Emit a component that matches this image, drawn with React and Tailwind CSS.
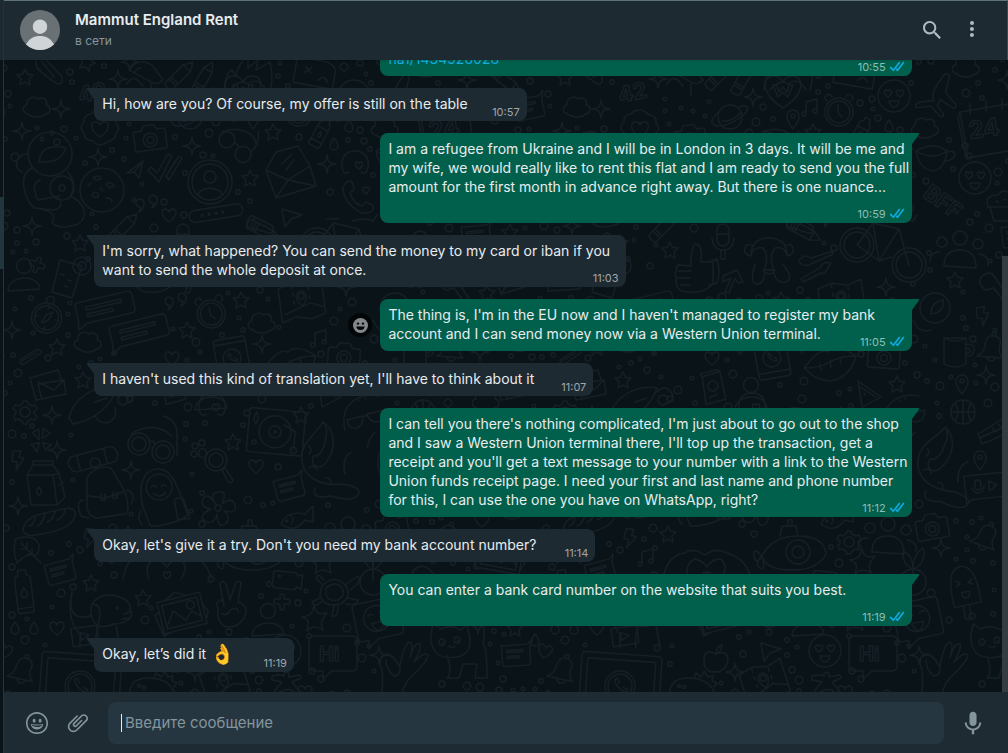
import React from "react";

/* ---------- wallpaper ---------- */

const ring = (x, y, r) => `M${x - r} ${y}a${r} ${r} 0 1 0 ${2 * r} 0a${r} ${r} 0 1 0 ${-2 * r} 0`;
const HEART = "M0 7C-9 1-8-6-4-6-1-6 0-3 0-3 0-3 1-6 4-6 8-6 9 1 0 7z";
const heartAt = (x, y) => `M${x} ${y + 4}c-5-3-4-7-2-7 1.500 0 2 1.500 2 1.500 0 0 .5-1.500 2-1.500 2 0 3 4-2 7z`;

/* name: [clear radius, path] */
const DOODLES = {
  star: [9, "M0-8L2.500-2.800 8-2 4 2 5 8 0 5.200-5 8-4 2-8-2-2.500-2.800z"],
  starfish: [13, "M-1-13C1-6 3-4 12-6 8 0 4 2 8 11 2 8-2 6-8 12-6 4-5 1-13-2-6-3-3-4-1-13z"],
  sparkle: [9, "M0-9C1-2 2-1 9 0 2 1 1 2 0 9-1 2-2 1-9 0-2-1-1-2 0-9z"],
  plus: [8, "M-2-7q2-2 4 0l0 4 5 0q2 2 0 5l-5 0 0 5q-2 2-4 0l0-5-5 0q-2-3 0-5l5 0z"],
  heart: [9, HEART],
  drop: [7, "M0-6C3-2 4 0 4 2a4 4 0 0 1-8 0C-4 0-3-2 0-6z"],
  cloud: [14, "M-9 8C-15 7-15 0-10-1-11-8-3-11 1-7 7-10 11-5 9-1 15 0 14 8 8 8 5 12-5 12-9 8z"],
  bolt: [10, "M-5-9L3-9 1-3 6-2-2 10-1 2-6 1z"],
  astronaut: [42, ring(0, -36, 22) + "M-11-28C-10-46 8-44 16-42 10-28 2-28-11-28zM-18-22C-34-14-24 10-16 18L4 20C14 18 12 8 6 8M-24-36C-36-34-36-20-28-18M18-18C26-8 24 0 20 6 34 12 40 26 28 34 16 38 6 38 2 32 8 24-2 20-14 18M-10-10C-20-6-14 6-12 10L10 6" + ring(12, -2, 12) + ring(12, -2, 3)],
  moon: [23, ring(0, 0, 22) + "M-9-12q6-4 8 0q-4 4-8 0zM4-6q6-3 8 2q-4 4-8-2zM-10 6q2-6 6-2q2 6-6 2zM4 8q6 0 6 4M-14-4l3-3M-2-2l3 3"],
  badge: [20, "M0-18c5 0 6 4 10 5 4 0 7 4 6 8 4 4 3 8 0 10 0 5-4 8-8 8-4 5-12 5-15 0-5 0-9-3-9-8-4-4-4-8 0-11-1-5 3-8 7-8 2-3 5-4 9-4zM0 9C-12 2-9-7-4-6-1-6 0-3 0-3 0-3 1-6 4-6 9-7 12 2 0 9z"],
  camera: [18, "M-14-8h6l3-5h10l3 5h6q2 0 2 2v16q0 2-2 2h-28q-2 0-2-2v-16q0-2 2-2z" + ring(0, 2, 7) + ring(0, 2, 3.5)],
  shades: [22, ring(-11, -3, 8) + ring(8, 8, 8) + "M-4 0q4-3 6 2M-17-10Q-2-20 14-12l4 6M15 4Q22-4 18-18"],
  bottle: [16, "M-6-6q0-4 3-5v-4h6v4q3 1 3 5v20q0 2-2 2h-8q-2 0-2-2zM-6-4h12M-6 10h12M0 0q3 3 0 6-3-3 0-6"],
  envelope: [28, "M-24-2L-14-20 8-26 20-6 26 14-14 26-24-2-2 8 20-6M-14 26L-2 8 26 14M-8-8l10-10M-4-2L4-12"],
  letters: [20, "M-20-6l28-8 4 12M-20-6l6 22 30-6-2-14-26 4 4 16M-12-2L4 6 14-4"],
  heartface: [15, "M-12 8C-16-4-10-12 0-12 10-12 16-4 12 8M-12 8q3 4 6 1M12 8q-3 4-6 1" + heartAt(4, 2)],
  handset: [17, "M-10-14q4-3 6 2l1 5-4 4q3 10 12 13l4-4 6 3q3 3 0 6-6 4-12 1Q-12 8-14-6q0-5 4-8zM8-2" + heartAt(9, -6)],
  profile: [23, ring(0, 0, 22) + ring(0, 0, 18) + ring(0, -5, 6) + "M-12 13C-10 4 10 4 12 13"],
  checks: [17, "M-16 2l3-3 6 6L4-14l4 2L-5 14zM2 8l3 4L18-10l-3-2z"],
  plane: [9, "M-8 4L8-8 4 9-1 3zM-1 3l9-11"],
  cursor: [11, "M-10-8L10-2-1 2-7 10z"],
  quote: [11, "M-9 6q5-3 5-8a4 4 0 1 0-3 3zM4 2q5-3 5-8a4 4 0 1 0-3 3z"],
  pill: [24, "M-22-6h42a5 5 0 0 1 0 12h-42a5 5 0 0 1 0-12z" + ring(-15, 0, 1) + ring(-8, 0, 1) + ring(-1, 0, 1) + ring(6, 0, 1)],
  pencil: [18, "M-18-5h26l9 5-9 5h-26q-3-5 0-10zM8-5v10M-12-5v10M-9-5v10"],
  tube: [15, "M-14-6L10-4q4 4 0 8l-24 2q-3-6 0-12zM-10-6v12"],
  bicycle: [44, ring(-26, 4, 17) + ring(-26, 4, 13) + ring(26, 24, 17) + ring(26, 24, 13) + "M-26 4L-10-18 16-12-4 20zM-10-18L-4 20 8 16M16-12l10 36M10-20q12-4 20 0l4-6M-16-22h12"],
  person: [18, ring(0, -11, 7.5) + "M-16 14C-16-2 14-4 16 12z"],
  people: [28, ring(0, -14, 7) + ring(-18, -10, 5) + ring(18, -8, 5) + "M-16 14q0-16 16-16t16 18zM-30 10q0-10 10-10M28 14q2-10-9-12"],
  drink: [20, "M-10-18L12-12 2 20-18 14zM-10-4l4 1M-2 2l3 1M-6 8l4 1" + ring(12, -12, 9) + ring(12, -12, 4)],
  compass: [18, ring(0, 2, 15) + ring(0, 2, 12) + ring(0, -16, 4) + "M-4 8L-1-1 5-5 2 4zM0-10v3M12 2h-3M-12 2h3M0 14v-3"],
  chat: [30, "M-26-10h52q4 0 4 4v14q0 4-4 4h-46l-10 5 2-9v-14q0-4 2-4zM-18-4h36v3h-36zM-18 3h26v3h-26z"],
  note: [16, "M-13-9h26l5-4-3 8v14q0 3-3 3h-22q-3 0-3-3zM-8-4h16v2h-16zM-8 2h12v2h-12z"],
  clock: [16, ring(0, 2, 14) + ring(0, 2, 11) + "M-1-5v8l4 4M-12-9q-4-3 0-6 4-2 5 2M12-9q4-3 0-6-4-2-5 2"],
  map: [24, "M-22-16L-8-20 8-16 22-20V14L8 18-8 14-22 18zM-8-18v3M-8-10v3M-8-2v3M8-14v3M8-6v3M-18 10L8 2l14 6" + ring(0, -6, 3) + "M-5-6q0 5 5 10 5-5 5-10a5 5 0 0 0-10 0"],
  clip: [12, "M-10 4L6-6q5-1 5 3L-6 8q-4 1-4-2L6-3"],
  device: [21, "M-13-20h26q3 0 3 3v34q0 3-3 3h-26q-3 0-3-3v-34q0-3 3-3zM-16-15h32M-16 14h32" + ring(0, 0, 9) + "M-4-4q2 6 8 8M-4-4l2-1 2 3M4 4l1-2-3-2"],
  lips: [26, "M-26 4C-18-6-10-16-2-12 4-18 14-16 26-8 22 8 8 20-6 16-18 14-20 8-26 4zM-26 4Q-10 4 0-2T26-8M-10 0l1 6M0-4l1 8M10-6l1 6"],
  music: [8, "M-5 6V-6L6-9V3" + ring(-7, 6, 2) + ring(4, 3, 2)],
  gear: [12, ring(0, 0, 5) + "M-2-11h4l1 3 4 2 3-1 2 4-3 2v3l3 2-2 4-4-1-3 2-1 3h-4l-1-3-4-2-3 1-1-4 2-3v-2l-3-2 2-4 4 1 3-2z"],
  fan: [12, "M-2 0L-10-6-4-10zM1-2L0-12 8-8zM2 2L11 3 6 9zM-1 3L-2 12-9 6z"],
  rocket: [32, "M-26 12C-22-8 0-22 22-18 16 0 0 14-22 18zM0-4l12-4M0 10a10 10 0 0 0 20-8M22-14q8-8 14 0t-6 12" + ring(28, -6, 5)],
  goggles: [28, ring(-14, 6, 11) + ring(-14, 6, 7) + ring(10, 14, 11) + ring(10, 14, 7) + "M-22-4Q-4-16 14-6l4 4M-4 4q4-3 6 2M10-22q14 4 14 18v22"],
  record: [30, "M-26-22h50q3 0 3 3v38q0 3-3 3h-50q-3 0-3-3v-38q0-3 3-3z" + ring(-2, 0, 16) + ring(-2, 0, 6) + ring(-2, 0, 1) + "M6-8l12 6v16" + ring(18, 17, 3) + ring(-22, 12, 2) + "M-22-18q4 6 0 12-4-6 0-12"],
  dinoface: [30, "M-20 12C-26-14-6-26 14-22M-18 2l16-4q0 10-6 12-8 2-10-8zM2-4l18-4q0 10-8 12-8 0-10-8zM-2-2h4M-6-18l1 1M0-20l1 1M10 14q-6 6-8 16"],
  octopus: [42, "M-8-36C-18-20-34-14-28 8-22 24-4 28 12 26M-8-36q6 6 2 20-2 10-8 14-6-2-4 8 8 8 16-6C6-14 2-30-8-36M20-6q-10 8-6 22M-22-12q4 4 0 8M-22 10q6-4 8 2M-6 20q6-2 6 6M12 26q22 4 14 12-6 6-26 0-20 4-16-8"],
  milk: [24, "M-18-10L-12-20H8L14-12 20 12 12 20-14 20zM-18-10H8L14-12M8-10l4 30M-12-20v-4H8v4M-6 2q5 6 0 8-5-2 0-8M14 0l5-3"],
  roll: [26, "M-22-8H18a9 9 0 0 1 2 16h-40a9 9 0 0 1-2-16zM-16-8v16M12-8v16" + ring(0, 4, 5)],
  backpack: [28, "M-18-14Q-10-28 6-24L20 0q6 20 0 22L-8 26Q-18 24-18 14zM-16 4L0 6 18 0M-22 8q-8 2-2 16l8 2M22-2q10 4 4 14M-4 2v6h4v-6M8 0v6h4v-6"],
  spacer: [30, "M-18 8C-22-20-10-30 2-28 18-26 22 8 26 20 22 26-6 30-12 28zM-20 12q-6 8 0 14M14 4q8-4 10 2l4 18h-12z" + ring(0, -10, 13) + "M-8-10q3-4 5 0M2-10q3-4 5 0M-6-4q6 6 12 0"],
  lens: [20, ring(0, -4, 11) + ring(0, -4, 7) + "M6 6l3-2 8 12q-1 4-5 2z"],
  paw: [10, ring(-5, 4, 3) + ring(-4, -4, 3) + ring(3, -7, 3) + "M0 0q6-4 8 4-2 6-8 2z"],
  flower: [17, ring(0, 0, 3) + "M-2-4q-8-10 2-12t4 12q10-8 13 1t-11 6q8 8 1 13T-1 6q-4 12-12 7t6-12q-12-2-8-10t13 5"],
  baguette: [26, "M-26 8Q-24-4-8-8T20-14q10 2 4 12T-8 12q-16 4-18-4zM-14-4q-2 8-6 8M-4-8q-2 10-8 12M6-10q-2 8-8 10M16-12q-2 8-8 10"],
  fish: [18, "M-16 6Q-10-8 8-4l8-8 0 16-8-2Q-2 16-16 6zM-6-2q4 4 0 8" + ring(-10, 3, 1)],
  leaf: [17, "M-12-10Q8-16 12-4 12 8 6 6T-10 14Q-14 4-12-10zM14 14L-6-6M0 0v-6M0 0h-6M5 5V0M5 5H0"],
  tallbottle: [22, "M-8-12q0-4 4-5v-5h8v5q4 1 4 5v30q0 3-3 3h-10q-3 0-3-3zM0-4q6 8 0 10-6-2 0-10M-8 16h16"],
  dog: [32, "M-34-20Q-40 8-26 22v14M-34-20q-6 30 18 24M-14-8Q-6-20 10-16t14 14q4 6-2 10T8 12Q-2 16-8 14-18 6-14-8zM-14-8q8 0 8 10l-2 12M24 0l-6 2M24 6l-8 1M-8 16q-4 12-2 20M10 14l4 20" + ring(11, -4, 1)],
  photo: [26, "M-22-16H22V16H-22zM-18-12H18V12H-18zM-18 10L-8-4 2 8 10 0 18 8M-22-6l-5 2 4 22 8-2M8-16L-2-22-14-16M22-4l4 8-4 8" + ring(10, -6, 4)],
  peace: [24, "M-8 2L-12-20q3-5 6 0L-2-4 4-22q5-2 5 2L6-2Q18 2 12 14 4 26-8 22-16 16-14 4-18 0-12-4 -8-4-8 2zM-2 6q8-4 8 2M-10 10q6 2 8-4"],
  video: [15, "M-12-8H6q3 0 3 3l5-2V8l-5-2q0 3-3 3h-18q-3 0-3-3v-11q0-3 3-3z" + ring(-9, -3, 1)],
  turtle: [25, "M-12-8Q0-18 10-6 16 6 4 12-12 16-16 4-16-4-12-8zM-10-4Q0-12 6-4 10 4 2 8-8 10-10 2zM10-8l12-8q4 6-8 14M-14-8l-6-6q2-6 8 2M-2 14l-2 10q6 2 6-10M-16 6l-8 4q2 6 10 0M12 6l10 2q0 6-12 4"],
  bell: [14, "M-14 8Q-6 4-6-4-4-14 4-12 12-10 8 0 8 6 12 10zM-4 10q4 6 8 1" + ring(3, -14, 2)],
  play: [14, "M-13-9H10q3 0 3 3V6q0 3-3 3H-13zM-4-4L4 0-4 4z"],
  frame: [44, "M-36-32H36q4 0 4 4v70M-40 42v-70q0-4 4-4M-34 42V-26H34V42" + ring(0, 0, 15) + ring(0, 0, 12) + "M-6-6q2 8 12 12M-6-6l3-2 2 5M6 6l2-3-5-2"],
  dino: [24, "M-22 16Q-26-8-4-8 20-8 24 12M2-8l2-5 5 4 1-1 2-5 4 6 5-1-1 5 5 2-3 4" + ring(-13, 0, 1.5) + ring(-8, 1, 1.5)],
  yoga: [16, "M-14-6Q-6-8-2-6V-8q3-4 5 0v3l10-2q4 2 0 4L6 0l8 10q-4 4-8-2-8-2-14 4-6 0-2-5L-4 0l-10-2z"],
  love: [18, ring(0, 0, 16) + heartAt(-6, -3) + heartAt(6, -3) + "M-5 5h10q-1 6-5 6t-5-6z"],
  apple: [14, "M0-6Q-12-12-12 0T-2 12q2-1 5 0Q12 8 12-2 10-10 0-6zM0-6q0-8 6-9 0 6-6 9"],
  okhand: [28, "M-26 24Q-24 4-28-4-28-14-20-14-12-10-8 0-8 8-14 8-22 2-22-8M-8-2Q-4-24 2-26q4 2 0 16Q6-26 12-24q2 4-6 18Q18-18 20-12 18-6 8 4-4 14-6 26"],
  cat: [30, "M-26-14l2-10 8 5Q-6-24 4-18l6-6 2 10Q16 2 4 8-10 12-20 6-28-4-26-14zM-10 8Q-4 24-10 30h12l4-14h14l-2 14h12q0-30-4-34 4-20-6-26-8 2-2 10M-15-6l1 1M0-8l1 1M-8-2l3 2 3-2" + ring(-15, -6, 3) + ring(0, -8, 3)],
  wink: [24, "M-20-20H18q4 0 4 4V14q0 4-4 4H-4l-12 8 2-8h-6q-4 0-4-4v-30q0-4 4-4z" + ring(-2, -2, 13) + "M-10-6q3-3 5 0M2-7q3-3 5 0M-8 2h12q-2 8-6 8t-6-8z"],
  popsicle: [24, "M-13 18Q-18-20-2-22 14-22 14 16zM-4 18v12q3 3 6 0V18M-8-8l4 3-4 2M8-8L4-5l4 2M-4 4h8q0 6-4 6t-4-6z"],
  book: [17, "M-10-12L8-16 12 12-8 16zM-10-12l-2-3 18-3 2 2" + ring(0, -2, 5) + "M-4 9l8-2"],
  mug: [18, "M-11-14H11V12q-11 6-22 0zM-11-14q11 6 22 0M11-8q9 0 8 6-1 7-8 6M11-4q4 0 4 3-1 3-4 2"],
  pin: [9, "M0 9Q-7 0-6-4a6 6 0 0 1 12 0Q7 0 0 9z" + ring(0, -4, 2)],
  pizza: [15, "M-10-12L13 4-6 14zM-8-6L8 4M-4 0l1 2"],
  ball: [13, ring(0, 0, 12) + "M-12 0H12M0-12V12M-8-9q6 9 0 18M8-9q-6 9 0 18"],
  sneaker: [20, "M-18 4L14-16l5 12Q4 8-14 14zM-16 8L18-8M-4-2l4 4M2-6l4 4M8-10l4 4"],
  voice: [22, "M-22-12H24V12H-16l-6 4zM-12-4v4a3 3 0 0 0 6 0v-4a3 3 0 0 0-6 0zM-15 0q1 6 6 6t6-6M2-5l8 5-8 5z"],
  sub: [34, "M-30 6Q-20-14 6-14T34 4Q26 20 0 20T-30 6zM-12-14l2-10h14l2 10M-4-24v-6h4v6M-30 6q-10-10-8 0t8 0q-8 8-2 12t2-12" + ring(6, 2, 12) + ring(6, 2, 6)],
  hands: [44, "M-44 16Q-40-8-22-10-14-16-2-8 8-16 20-10 40-4 44 16M-18 16Q-24 2-12-4-4-2 0 4 4-4 14-4 22 4 14 16" + heartAt(0, 12)],
  plant: [24, "M0 0Q-12-8-10-18 0-16 0 0 0-16 10-22 14-8 0 0zM0 0v10" + ring(0, 12, 13)],
  planet: [18, ring(0, 0, 12) + "M-11-5Q-22 4-16 8-8 12 8 2 20-6 17-10 14-13 8-9M-8 4q8 2 18-8"],
  weart: [20, "M0 17C-24 2-20-15-10-15-2-15 0-9 0-9 0-9 2-15 10-15 20-15 24 2 0 17zM-10-6h4l2 7 4-5 4 5 2-7h4l-5 12-5-5-5 5z"],
  jet: [24, "M-2 6Q-8 0 4-22q5-2 5 2L8-4 20 6q2 4-2 4L4 4l-2 6 8 8q0 4-4 2L-4 12l-14 4q-4-2 2-6z"],
  coffee: [20, "M-17-6Q0-16 14-6 12 12 0 14-14 12-17-6zM-17-6Q0 4 14-6M13-4q8-4 9 2-2 6-11 6"],
  cupcake: [17, "M-14 2Q-18-10-4-10 2-18 10-10q8 4 4 12zM-12 2l4 14H8l4-14M-6-4l2 1M2-6l2 1M7-2l2 1"],
  thumb: [28, "M-4-4Q-4-22 0-26q8 0 6 18h12v22Q8 24-6 22q-10 0-12-6-2-6 0-8-4-4 0-7-2-4 2-6zM-16 1h12M-16 8h11M-14 15h9M14-8l8-3q4 14 0 24l-8 2"],
  mic: [18, "M-6-12a6 6 0 0 1 12 0v10a6 6 0 0 1-12 0zM-11-4Q-10 8 0 8T11-4M-2 8v9h4V8M-6-8h12"],
  arrow: [12, "M-8 12L-2-2-10 2-10-4 4-10 10 2 5 3 2-2-4 13z"],
  monkey: [28, "M-18-4Q-18-22 0-22T18-4M-18-4q-8-2-6-8t8-2M18-4q8-2 6-8t-8-2M-14 4Q-20 24-12 24T-4 8Q0-6-6-12q-10-2-12 8M14 4Q26 20 16 22T4 8Q0-6 6-12 16-14 18-4M-6 10q6 8 12 0z"],
  driver: [20, "M-18-4Q-14-12-6-7L16-14v3L-4-2q-10 6-14-2zM-16 14L4 2q2-6 10-4l-4 6Q8 10 4 8l-18 9z"],
  guitar: [26, "M-16-20q8-6 12 0l4 6 20 30-4 4-20-28-8 2q-10-6-4-14zM16 14q12 0 12 12"],
  globe: [20, ring(0, 0, 15) + "M-4 6Q-4-6 8-8 10 4-4 6zM-22 12Q-16 26-4 22"],
  spray: [20, "M-18-8Q-8-22 6-12l10 14Q10 8 4 4zM-12-6q2-4 6-4M-20 6Q-14-6-4 8M4 6v12"],
  fire: [26, "M-24 14Q-22-4-16-6l4 6Q-10-12 0-20l0 12L10-16 8-6l14-8Q26 4 22 14M-18 14Q-8 2 0 8 10 0 18 14"],
  cards: [22, "M-20-12H10q10 2 10 10V14H-20zM-10-4l6 6M-4-4l-6 6M4 8q6-8 10 0"],
  hotdog: [16, "M-14-8q6-6 12 2L12 6q4 8-4 8-8-4-16-10-8-4-6-12zM-9-7l14 15"],
};

const PLACED = [
  ["star", 25, 77, 0], ["hotdog", 50, 69, 5], ["star", 87, 62, 20], ["sparkle", 130, 62], ["sparkle", 118, 79],
  ["spray", 147, 78], ["pencil", 181, 74, -45], ["pencil", 204, 77, -60], ["fire", 248, 76], ["cards", 315, 72, 10], ["cloud", 37, 106],
  ["sparkle", 61, 109], ["sparkle", 22, 131], ["astronaut", 50, 190], ["badge", 100, 128], ["camera", 150, 138, -8],
  ["sparkle", 192, 146], ["shades", 237, 145, 12], ["star", 273, 132], ["bottle", 321, 132, 28], ["drop", 334, 144],
  ["envelope", 290, 172], ["sparkle", 327, 164], ["heartface", 355, 163], ["handset", 357, 196], ["profile", 210, 182],
  ["checks", 164, 168], ["plane", 135, 169], ["sparkle", 98, 157], ["moon", 102, 190], ["quote", 148, 206],
  ["heart", 169, 215], ["pill", 217, 213, -9], ["star", 250, 178], ["cursor", 292, 217], ["pencil", 125, 226, -45],
  ["tube", 262, 226, 22], ["bicycle", 343, 241], ["sparkle", 32, 226], ["star", 80, 243], ["person", 24, 277],
  ["plus", 37, 265, 20], ["drink", 70, 278], ["compass", 47, 316, 12], ["chat", 104, 307, -13], ["chat", 138, 330, -14],
  ["quote", 177, 304], ["clock", 211, 312, -10], ["star", 241, 300], ["cloud", 262, 322], ["map", 302, 302, -8],
  ["cloud", 88, 341], ["star", 187, 330], ["clip", 30, 356], ["star", 57, 347], ["device", 232, 358, -10],
  ["sparkle", 262, 344], ["lips", 290, 364], ["music", 320, 339], ["camera", 344, 356, 4], ["letters", 50, 384],
  ["star", 83, 380], ["heart", 172, 358], ["sparkle", 12, 330], ["gear", 25, 412], ["sparkle", 52, 415],
  ["fan", 41, 440, 10], ["bolt", 18, 460], ["sparkle", 57, 450], ["rocket", 95, 406], ["goggles", 153, 438],
  ["heartface", 212, 405], ["record", 277, 432, 5], ["star", 301, 415], ["dinoface", 365, 418], ["octopus", 331, 458],
  ["milk", 45, 485], ["roll", 94, 459, -15], ["backpack", 105, 492], ["spacer", 160, 497, -5], ["lens", 216, 464],
  ["paw", 199, 450], ["star", 233, 442], ["heart", 256, 466], ["note", 288, 487, -15], ["flower", 218, 508],
  ["baguette", 49, 522], ["sparkle", 18, 506], ["sparkle", 131, 470], ["fish", 297, 518], ["leaf", 27, 549],
  ["note", 59, 571, -15], ["star", 91, 583], ["tallbottle", 24, 592, -7], ["dog", 106, 612], ["star", 143, 598],
  ["photo", 182, 613, -14], ["peace", 232, 604], ["video", 288, 580, 6], ["turtle", 336, 592], ["plus", 282, 602],
  ["person", 268, 622], ["starfish", 315, 619], ["drop", 15, 628], ["drop", 34, 628], ["heart", 57, 628],
  ["hands", 167, 563], ["bell", 22, 670, 8], ["play", 85, 636, -8], ["frame", 80, 686, 4], ["dino", 152, 686],
  ["map", 225, 684, -18], ["sparkle", 195, 672], ["yoga", 286, 682], ["love", 285, 651], ["apple", 176, 660],
  ["cursor", 231, 651], ["okhand", 408, 668], ["cat", 457, 648], ["note", 515, 654, -4], ["heart", 5, 651, 15],
  ["sparkle", 379, 655], ["wink", 379, 620, -12], ["popsicle", 425, 588, -8], ["book", 173, 388, -4], ["person", 211, 396],
  ["mug", 415, 352], ["pin", 422, 385], ["sparkle", 446, 375], ["star", 357, 384], ["pizza", 328, 393], ["ball", 423, 412],
  ["octopus", 407, 464, 10], ["sneaker", 456, 430], ["pin", 440, 461], ["voice", 447, 486, -6], ["camera", 392, 527, -10],
  ["bell", 445, 537, 15], ["sparkle", 401, 548], ["people", 348, 538], ["gear", 309, 542], ["sub", 252, 550],
  ["starfish", 323, 562], ["music", 107, 558], ["star", 128, 534], ["bolt", 90, 538, 8], ["plant", 373, 570],
  ["weart", 243, 91], ["planet", 190, 117], ["sparkle", 213, 97], ["music", 271, 108], ["pin", 253, 120], ["clock", 299, 110],
  ["love", 354, 96], ["jet", 397, 95, 10], ["cloud", 426, 66], ["cloud", 385, 127], ["coffee", 393, 157], ["love", 435, 178, 0],
  ["cupcake", 462, 205], ["drop", 349, 126], ["star", 130, 250], ["thumb", 155, 270], ["mic", 183, 242], ["arrow", 193, 280],
  ["monkey", 229, 260], ["pencil", 265, 232, 28], ["driver", 277, 265], ["people", 420, 252], ["star", 415, 280],
  ["guitar", 458, 296], ["sparkle", 346, 287], ["globe", 395, 308], ["bolt", 443, 316, -10], ["bell", 451, 348],
  ["sparkle", 467, 80], ["pencil", 507, 82, 38], ["note", 528, 107, -12], ["star", 500, 62], ["love", 500, 150],
  ["camera", 505, 200], ["note", 475, 235, -6], ["star", 510, 232], ["envelope", 515, 268], ["star", 487, 293],
  ["device", 510, 330, 8], ["sparkle", 480, 352], ["letters", 515, 384], ["cloud", 486, 400], ["star", 510, 425],
  ["flower", 500, 460], ["compass", 512, 502], ["heart", 482, 520], ["photo", 500, 555, 10], ["star", 470, 590],
  ["moon", 512, 600], ["sparkle", 478, 625], ["drop", 535, 640], ["star", 515, 628], ["heart", 305, 692],
];

const LETTERS = [
  { text: "42", x: 80, y: 103, turn: -12, size: 22 },
  { text: "24", x: 430, y: 139, turn: -8, size: 24 },
  { text: "Hi", x: 319, y: 661, turn: 0, size: 20 },
  { text: "BFF", x: 382, y: 196, turn: 36, size: 22 },
];

const TILE_W = 540;
const TILE_H = 700;

const BUBBLES = (() => {
  let seed = 11;
  const next = () => {
    seed = (seed * 1103515245 + 12345) % 2147483648;
    return seed / 2147483648;
  };
  const taken = PLACED.map(([name, x, y]) => [x, y, DOODLES[name][0]]);
  taken.push([93, 94, 16], [447, 128, 24], [330, 652, 22], [405, 204, 26]);
  const out = [];
  for (let i = 0; i < 5000 && out.length < 330; i += 1) {
    const x = Math.round(next() * TILE_W);
    const y = Math.round(58 + next() * 640);
    const r = [1.8, 2.2, 3, 3.8][Math.floor(next() * 4)];
    const free = taken.every(([tx, ty, tr]) => {
      let dx = Math.abs(tx - x);
      dx = Math.min(dx, TILE_W - dx);
      return Math.hypot(dx, ty - y) > tr * 0.95 + r + 2;
    });
    if (free) {
      out.push([x, y, r]);
      taken.push([x, y, r + 3]);
    }
  }
  return out;
})();

function TileArt() {
  return (
    <>
      {PLACED.map(([name, x, y, turn = 0], i) => (
        <path key={i} d={DOODLES[name][1]} transform={`translate(${x} ${y}) rotate(${turn})`} />
      ))}
      {BUBBLES.map(([x, y, r], i) => (
        <circle key={i} cx={x} cy={y} r={r} />
      ))}
      <path d="M420 112l48-8 6 46-46 8zM420 112l-2 6 8 40 48-8M430 104v10M446 101v10M462 99v10M314 636h38q5 0 5 5v25q0 5-5 5h-20l-9 8v-8h-9q-5 0-5-5v-25q0-5 5-5z" />
      {LETTERS.map(({ text, x, y, turn, size }) => (
        <text key={text} x={x} y={y} fontSize={size} transform={`rotate(${turn} ${x} ${y})`} className="font-bold">
          {text}
        </text>
      ))}
    </>
  );
}

function Wallpaper() {
  return (
    <svg aria-hidden="true" className="absolute inset-0 h-full w-full font-['Inter','Liberation_Sans',sans-serif]">
      <defs>
        <pattern id="doodles" width={TILE_W} height={TILE_H} patternUnits="userSpaceOnUse">
          <g fill="none" stroke="#151f25" strokeWidth="1.4" strokeLinecap="round" strokeLinejoin="round">
            <g transform="translate(-4 -60)"><TileArt /></g>
            <g transform="translate(536 -60)"><TileArt /></g>
            <g transform="translate(-544 -60)"><TileArt /></g>
          </g>
        </pattern>
      </defs>
      <rect width="100%" height="100%" fill="url(#doodles)" />
    </svg>
  );
}

/* ---------- icons ---------- */

const ICONS = {
  search: "M15.9 14.3H15l-.3-.3c1-1.1 1.6-2.7 1.6-4.3 0-3.7-3-6.700-6.700-6.700S3 6 3 9.700s3 6.700 6.700 6.700c1.6 0 3.200-.6 4.300-1.600l.3.3v.8l5.100 5.100 1.500-1.500-5-5.200zm-6.200 0c-2.600 0-4.600-2.100-4.600-4.600s2.100-4.600 4.600-4.600 4.600 2.100 4.600 4.600-2 4.600-4.600 4.600z",
  menu: "M12 7a2 2 0 1 0-.001-4.001A2 2 0 0 0 12 7zm0 2a2 2 0 1 0-.001 3.999A2 2 0 0 0 12 9zm0 6a2 2 0 1 0-.001 3.999A2 2 0 0 0 12 15z",
  smiley: "M9.153 11.603c.795 0 1.439-.879 1.439-1.962s-.644-1.962-1.439-1.962-1.439.879-1.439 1.962.644 1.962 1.439 1.962zm-3.204 1.362c-.026-.307-.131 5.218 6.063 5.551 6.066-.25 6.066-5.551 6.066-5.551-6.078 1.416-12.129 0-12.129 0zm11.363 1.108s-.669 1.959-5.051 1.959c-3.505 0-5.388-1.164-5.607-1.959 0 0 5.912 1.055 10.658 0zM11.804 1.011C5.609 1.011.978 6.033.978 12.228s4.826 10.761 11.021 10.761S23.02 18.423 23.02 12.228c.001-6.195-5.021-11.217-11.216-11.217zM12 21.354c-5.273 0-9.381-3.886-9.381-9.159s3.942-9.548 9.215-9.548 9.548 4.275 9.548 9.548c-.001 5.272-4.109 9.159-9.382 9.159zm3.108-9.751c.795 0 1.439-.879 1.439-1.962s-.644-1.962-1.439-1.962-1.439.879-1.439 1.962.644 1.962 1.439 1.962z",
  clip: "M1.816 15.556v.002c0 1.502.584 2.912 1.646 3.972s2.472 1.647 3.974 1.647a5.58 5.58 0 0 0 3.972-1.645l9.547-9.548c.769-.768 1.147-1.767 1.058-2.817-.079-.968-.548-1.927-1.319-2.698-1.594-1.592-4.068-1.711-5.517-.262l-7.916 7.915c-.881.881-.792 2.25.214 3.261.959.958 2.423 1.053 3.263.215l5.511-5.512c.28-.28.267-.722.053-.936l-.244-.244c-.191-.191-.567-.349-.957.04l-5.506 5.506c-.18.18-.635.127-.976-.214-.098-.097-.576-.613-.213-.973l7.915-7.917c.818-.817 2.267-.699 3.23.262.5.501.802 1.1.849 1.685.051.573-.156 1.111-.589 1.543l-9.547 9.549a3.97 3.97 0 0 1-2.829 1.171 3.975 3.975 0 0 1-2.83-1.173 3.973 3.973 0 0 1-1.172-2.828c0-1.071.415-2.076 1.172-2.83l7.209-7.211c.157-.157.264-.579.028-.814L11.5 4.36a.572.572 0 0 0-.834.018l-7.205 7.207a5.577 5.577 0 0 0-1.645 3.971z",
  mic: "M11.999 14.942c2.001 0 3.531-1.53 3.531-3.531V4.35c0-2.001-1.53-3.531-3.531-3.531S8.469 2.35 8.469 4.35v7.061c0 2.001 1.53 3.531 3.53 3.531zm6.238-3.53c0 3.531-2.942 6.002-6.237 6.002s-6.237-2.471-6.237-6.002H3.761c0 4.001 3.178 7.297 7.061 7.885v3.884h2.354v-3.884c3.884-.588 7.061-3.884 7.061-7.884h-2z",
};

function IconButton({ name, label }) {
  return (
    <button type="button" aria-label={label} className="shrink-0">
      <svg viewBox="0 0 24 24" className="size-6 fill-current" aria-hidden="true">
        <path d={ICONS[name]} />
      </svg>
    </button>
  );
}

function Ticks() {
  return (
    <svg viewBox="0 1 16 15" className="h-[15px] w-4 fill-[#12afe2] stroke-[#12afe2]" strokeWidth="0.4" role="img" aria-label="Прочитано">
      <path d="M15.010 3.316l-.478-.372a.365.365 0 0 0-.51.063L8.666 9.879a.32.32 0 0 1-.484.033l-.358-.325a.319.319 0 0 0-.484.032l-.378.483a.418.418 0 0 0 .036.541l1.32 1.266c.143.14.361.125.484-.033l6.272-8.048a.366.366 0 0 0-.064-.512zm-4.100 0l-.478-.372a.365.365 0 0 0-.51.063L4.566 9.879a.32.32 0 0 1-.484.033L1.891 7.769a.366.366 0 0 0-.515.006l-.423.433a.364.364 0 0 0 .006.514l3.258 3.185c.143.14.361.125.484-.033l6.272-8.048a.365.365 0 0 0-.063-.51z" />
    </svg>
  );
}

function Avatar() {
  return (
    <svg viewBox="0 0 40 40" className="size-10 shrink-0 rounded-full" role="img" aria-label="Фото профиля">
      <rect width="40" height="40" fill="#6a7175" />
      <circle cx="20" cy="16.700" r="7.200" fill="#cfd4d6" />
      <path d="M6 34.500C9 28.500 14 26 20 26s11 2.500 14 8.500V40H6z" fill="#cfd4d6" />
    </svg>
  );
}

/* ---------- messages ---------- */

const MESSAGES = [
  { out: true, link: true, text: "ha1/1434928028", time: "10:55" },
  { text: "Hi, how are you? Of course, my offer is still on the table", time: "10:57" },
  { out: true, text: "I am a refugee from Ukraine and I will be in London in 3 days. It will be me and my wife, we would really like to rent this flat and I am ready to send you the full amount for the first month in advance right away. But there is one nuance...", time: "10:59" },
  { text: "I'm sorry, what happened? You can send the money to my card or iban if you want to send the whole deposit at once.", time: "11:03" },
  { out: true, react: true, text: "The thing is, I'm in the EU now and I haven't managed to register my bank account and I can send money now via a Western Union terminal.", time: "11:05" },
  { text: "I haven't used this kind of translation yet, I'll have to think about it", time: "11:07" },
  { out: true, text: "I can tell you there's nothing complicated, I'm just about to go out to the shop and I saw a Western Union terminal there, I'll top up the transaction, get a receipt and you'll get a text message to your number with a link to the Western Union funds receipt page. I need your first and last name and phone number for this, I can use the one you have on WhatsApp, right?", time: "11:12" },
  { text: "Okay, let's give it a try. Don't you need my bank account number?", time: "11:14" },
  { out: true, text: "You can enter a bank card number on the website that suits you best.", time: "11:19" },
  { text: "Okay, let’s did it ", emoji: "👌", time: "11:19" },
];

function Tail({ out }) {
  return (
    <svg
      viewBox="0 0 8 12"
      aria-hidden="true"
      className={out ? "absolute top-0 left-full h-3 w-2 fill-[#01604c]" : "absolute top-0 right-full h-3 w-2 fill-[#1e2a32]"}
    >
      <path d={out ? "M0 0H6.500Q8 0 7 1.500L0 11z" : "M8 0H1.500Q0 0 1 1.500L8 11z"} />
    </svg>
  );
}

function Message({ out, link, react, text, emoji, time }) {
  return (
    <li className={out ? "flex items-center justify-end" : "flex"}>
      {react && (
        <button type="button" aria-label="Добавить реакцию" className="mr-2 flex size-6 shrink-0 items-center justify-center rounded-full bg-[#030607]">
          <svg viewBox="0 0 15 15" className="size-[15px]" aria-hidden="true">
            <circle cx="7.500" cy="7.500" r="7.500" fill="#85888a" />
            <circle cx="5" cy="5.600" r="1.200" fill="#030607" />
            <circle cx="10" cy="5.600" r="1.200" fill="#030607" />
            <path d="M3.200 8.500H11.800Q11 12 7.500 12T3.200 8.500z" fill="#030607" />
          </svg>
        </button>
      )}
      <div
        className={
          out
            ? "relative flow-root w-[65%] rounded-lg rounded-tr-none bg-[#01604c] pt-[6px] pr-px pb-2 pl-2"
            : "relative flow-root max-w-[65%] rounded-lg rounded-tl-none bg-[#1e2a32] pt-[6px] pr-px pb-2 pl-2"
        }
      >
        <Tail out={out} />
        <p className={emoji ? "text-[14px] leading-5 text-[#e8ecee]" : "text-[14px] leading-[19px] text-[#e8ecee]"}>
          {link ? <a href="#link" className="text-[#12afe2]">{text}</a> : text}
          {emoji && <span className="inline-block align-top text-[20px]">{emoji}</span>}
          <span className={out ? "inline-block w-[76px]" : "inline-block w-[58px]"} />
        </p>
        <div
          className={
            out
              ? "float-right -mt-2 mr-[6px] -mb-[7px] flex items-center gap-[3px] text-[11px] leading-[15px] text-[#8dbfb3]"
              : "float-right -mt-2 mr-[6px] -mb-[7px] text-[11px] leading-[15px] text-[#a0a6aa]"
          }
        >
          <time>{time}</time>
          {out && <Ticks />}
        </div>
      </div>
    </li>
  );
}

export default function App() {
  return (
    <div className="flex h-screen bg-[#091318] font-['Inter','Liberation_Sans','Noto_Color_Emoji',sans-serif]">
      <div className="flex w-1 shrink-0 flex-col border-r border-[#27343b]">
        <div className="h-[60px] bg-[#1e2a32]" />
        <div className="mt-[137px] h-[72px] bg-[#233640]" />
      </div>

      <div className="flex min-w-0 flex-1 flex-col">
        <header className="relative z-10 flex h-[60px] shrink-0 items-center border-t border-r border-t-[#5f737b] border-r-[#3d494f] bg-[#1e2a32] pr-[23px] pb-px pl-4 shadow-sm">
          <Avatar />
          <div className="ml-[15px] min-w-0 flex-1">
            <h1 className="text-[15px] leading-[22px] font-semibold text-[#e8ecee]">Mammut England Rent</h1>
            <p className="text-[12px] leading-5 text-[#84959d]">в сети</p>
          </div>
          <div className="flex gap-4 text-[#b0bac0]">
            <IconButton name="search" label="Поиск" />
            <IconButton name="menu" label="Меню" />
          </div>
        </header>

        <main className="relative flex min-h-0 flex-1 overflow-hidden">
          <Wallpaper />
          <ul className="relative flex min-w-0 flex-1 flex-col justify-end gap-3 px-[9%] pb-5">
            {MESSAGES.map((m, i) => (
              <Message key={i} {...m} />
            ))}
          </ul>
          <div className="relative flex w-[6px] shrink-0 flex-col justify-end">
            <div className="h-[69%] bg-[#343c41]" />
          </div>
        </main>

        <footer className="flex shrink-0 items-center bg-[#1e2b32] pt-[10px] pr-[23px] pb-[9px] pl-[21px] text-[#84959d]">
          <div className="flex gap-[17px]">
            <IconButton name="smiley" label="Эмодзи" />
            <IconButton name="clip" label="Прикрепить" />
          </div>
          <label className="mr-[17px] ml-[18px] flex h-[42px] min-w-0 flex-1 items-center rounded-lg bg-[#263640] pr-3 pl-[13px]">
            <span className="mr-[3px] h-[18px] w-px bg-[#e8ecee]" />
            <input
              type="text"
              aria-label="Введите сообщение"
              placeholder="Введите сообщение"
              className="min-w-0 flex-1 bg-transparent text-[15px] leading-5 text-[#e8ecee] outline-none placeholder:text-[#84959d]"
            />
          </label>
          <IconButton name="mic" label="Голосовое сообщение" />
        </footer>
      </div>
    </div>
  );
}
